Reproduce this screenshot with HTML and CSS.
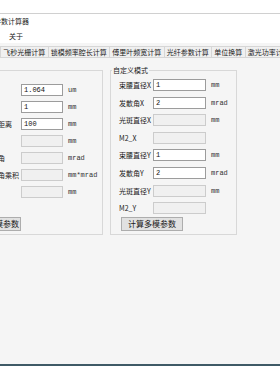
FILE: index.html
```html
<!DOCTYPE html>
<html lang="zh-CN">
<head>
    <meta charset="UTF-8">
    <meta name="viewport" content="width=device-width, initial-scale=1.0">
    <title>光束参数计算器</title>
    <link rel="stylesheet" href="styles.css">
</head>
<body>
    <div class="window">
        <div class="top-edge"></div>
        <div class="titlebar"><span class="title">光束参数计算器</span></div>
        <div class="menubar"><span class="menu-item">关于</span></div>

        <!-- Tabs -->
        <div class="tabs">
            <div class="tab">飞秒光栅计算</div>
            <div class="tab">锁模频率腔长计算</div>
            <div class="tab">傅里叶频宽计算</div>
            <div class="tab">光纤参数计算</div>
            <div class="tab">单位换算</div>
            <div class="tab">激光功率计算</div>
        </div>

        <div class="page">
            <!-- Single mode -->
            <fieldset class="group group-single">
                <legend>单模</legend>
                <div class="fields">
                    <div class="field"><label>波长</label><input type="text" value="1.064"><span class="unit">um</span></div>
                    <div class="field"><label>腰斑</label><input type="text" value="1"><span class="unit">mm</span></div>
                    <div class="field"><label>传输距离</label><input type="text" value="100"><span class="unit">mm</span></div>
                    <div class="field"><label>光斑</label><input type="text" disabled><span class="unit">mm</span></div>
                    <div class="field"><label>发散角</label><input type="text" disabled><span class="unit">mrad</span></div>
                    <div class="field"><label>发散角乘积</label><input type="text" disabled><span class="unit">mm*mrad</span></div>
                    <div class="field"><label>瑞利</label><input type="text" disabled><span class="unit">mm</span></div>
                </div>
                <button type="button" class="btn">计算单模参数</button>
            </fieldset>

            <!-- Custom (multi) mode -->
            <fieldset class="group group-custom">
                <legend>自定义模式</legend>
                <div class="fields">
                    <div class="field"><label>束腰直径X</label><input type="text" value="1"><span class="unit">mm</span></div>
                    <div class="field"><label>发散角X</label><input type="text" value="2"><span class="unit">mrad</span></div>
                    <div class="field"><label>光斑直径X</label><input type="text" disabled><span class="unit">mm</span></div>
                    <div class="field"><label>M2_X</label><input type="text" disabled></div>
                    <div class="field"><label>束腰直径Y</label><input type="text" value="1"><span class="unit">mm</span></div>
                    <div class="field"><label>发散角Y</label><input type="text" value="2"><span class="unit">mrad</span></div>
                    <div class="field"><label>光斑直径Y</label><input type="text" disabled><span class="unit">mm</span></div>
                    <div class="field"><label>M2_Y</label><input type="text" disabled></div>
                </div>
                <button type="button" class="btn">计算多模参数</button>
            </fieldset>
        </div>
    </div>
</body>
</html>
```

FILE: styles.css
```css
/* Reset */
* {
    margin: 0;
    padding: 0;
    box-sizing: border-box;
}

body {
    width: 280px;
    height: 380px;
    overflow: hidden;
    background: #fff;
    font-family: "Noto Sans CJK SC", "Noto Sans", sans-serif;
    font-size: 7px;
    color: #1a1a1a;
}

/* Window frame */
.window {
    height: 366px;
    background: #f5f5f5;
    border-bottom: 2px solid #3f5a66;
    overflow: hidden;
}

.top-edge {
    height: 14px;
    background: #fff;
    border-bottom: 1px solid #d0d0d0;
}

.titlebar {
    height: 15px;
    line-height: 15px;
    background: #fff;
    white-space: nowrap;
}

.title {
    display: inline-block;
    margin-left: -20px;
}

.menubar {
    height: 14px;
    line-height: 14px;
    background: #fff;
    padding-left: 9px;
}

/* Tabs */
.tabs {
    display: flex;
    margin-top: 3px;
    height: 12px;
    white-space: nowrap;
}

.tab {
    flex-shrink: 0;
    height: 12px;
    line-height: 10px;
    padding: 0 2.25px;
    background: #f0f0f0;
    border: 1px solid #d6d6d6;
    border-left-width: 0;
}

.tab:first-child {
    border-left-width: 1px;
}

/* Tab page */
.page {
    display: flex;
    gap: 7px;
    padding-top: 8px;
    margin-left: -42px;
}

.group {
    flex-shrink: 0;
    border: 1px solid #d8d8d8;
    min-width: 0;
}

.group legend {
    line-height: 9px;
    padding: 0 1px;
}

.group-single {
    width: 145px;
    padding: 9px 0 3px 0;
}

.group-custom {
    width: 127px;
    padding: 4px 0 3px 8px;
}

.group-custom legend {
    margin-left: -7px;
}

.fields {
    display: flex;
    flex-direction: column;
}

.group-single .fields {
    gap: 5px;
}

.group-custom .fields {
    gap: 5.6px;
}

.field {
    display: flex;
    align-items: center;
    height: 12px;
    white-space: nowrap;
}

.field label {
    flex-shrink: 0;
}

.group-single label {
    width: 62px;
    padding-left: 25px;
}

.group-custom label {
    width: 34px;
}

input {
    height: 12px;
    border: 1px solid #9c9c9c;
    background: #fff;
    padding: 0 2px;
    font-family: "Liberation Mono", monospace;
    font-size: 7px;
    color: #111;
    outline: none;
}

input:disabled {
    background: #f0f0f0;
    border-color: #cccccc;
}

.group-single input {
    width: 42px;
}

.group-custom input {
    width: 53px;
}

.unit {
    margin-left: 5px;
    font-family: "Liberation Mono", monospace;
    font-size: 7px;
    color: #333;
}

/* Buttons */
.btn {
    display: block;
    height: 14px;
    background: #e1e1e1;
    border: 1px solid #adadad;
    font-family: "Noto Sans CJK SC", sans-serif;
    font-size: 8px;
    line-height: 12px;
    color: #1a1a1a;
}

.group-single .btn {
    width: 52px;
    margin: 19px 0 0 10px;
}

.group-custom .btn {
    width: 62px;
    margin: 2.8px 0 0 2px;
}
```
